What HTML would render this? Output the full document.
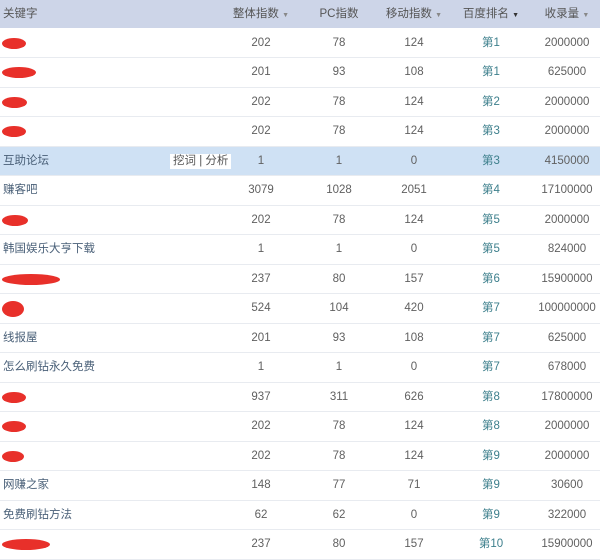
<!DOCTYPE html>
<html><head><meta charset="utf-8"><style>
*{margin:0;padding:0;box-sizing:border-box}
body{width:600px;height:555px;overflow:hidden;background:#fff;font-family:"Liberation Sans","Noto Sans CJK SC",sans-serif;font-size:11.5px;color:#606060}
.hd{position:absolute;left:0;top:0;width:600px;height:28px;background:#cdd5e8;color:#555}
.r{position:absolute;left:0;width:600px;height:29.5px;border-bottom:1px solid #e8ebf0}
.c{position:absolute;top:0;line-height:29px;text-align:center;width:90px;margin-left:-45px}
.k{position:absolute;left:3px;top:0;line-height:29px;color:#4a6078}
.hl{background:#cfe1f4}
.rk{color:#3d7f8c}
.b{position:absolute;top:9px;left:2px;height:11px;background:#e8302a;border-radius:50%}
.tool{position:absolute;left:170px;top:7px;height:15px;line-height:15px;padding:0 3px;background:#fff;color:#555}
.ar{font-size:7px;color:#888}
</style></head><body>
<div class="hd">
<span class="k" style="line-height:28px;color:#555">关键字</span>
<span class="c" style="left:261px;line-height:28px">整体指数 <span class="ar">▼</span></span>
<span class="c" style="left:339px;line-height:28px">PC指数</span>
<span class="c" style="left:414px;line-height:28px">移动指数 <span class="ar">▼</span></span>
<span class="c" style="left:491px;line-height:28px">百度排名 <span class="ar" style="color:#333">▼</span></span>
<span class="c" style="left:567px;line-height:28px">收录量 <span class="ar">▼</span></span>
</div>
<div id="t"></div>
<script>
var d=[
["",24,202,78,124,1,2000000],
["",34,201,93,108,1,625000],
["",25,202,78,124,2,2000000],
["",24,202,78,124,3,2000000],
["互助论坛",0,1,1,0,3,4150000],
["赚客吧",0,3079,1028,2051,4,17100000],
["",26,202,78,124,5,2000000],
["韩国娱乐大亨下载",0,1,1,0,5,824000],
["",58,237,80,157,6,15900000],
["",22,524,104,420,7,100000000],
["线报屋",0,201,93,108,7,625000],
["怎么刷钻永久免费",0,1,1,0,7,678000],
["",24,937,311,626,8,17800000],
["",24,202,78,124,8,2000000],
["",22,202,78,124,9,2000000],
["网赚之家",0,148,77,71,9,30600],
["免费刷钻方法",0,62,62,0,9,322000],
["",48,237,80,157,10,15900000]];
var h="";
d.forEach(function(r,i){
var top=28.5+i*29.5;
h+='<div class="r'+(i==4?' hl':'')+'" style="top:'+top+'px">';
if(r[1])h+='<span class="b" style="width:'+r[1]+'px'+(i==9?';height:16px;top:7px':'')+'"></span>';
else h+='<span class="k">'+r[0]+'</span>';
if(i==4)h+='<span class="tool">挖词 | 分析</span>';
h+='<span class="c" style="left:261px">'+r[2]+'</span><span class="c" style="left:339px">'+r[3]+'</span><span class="c" style="left:414px">'+r[4]+'</span><span class="c rk" style="left:491px">第'+r[5]+'</span><span class="c" style="left:567px">'+r[6]+'</span></div>';
});
document.getElementById("t").innerHTML=h;
</script>
</body></html>
